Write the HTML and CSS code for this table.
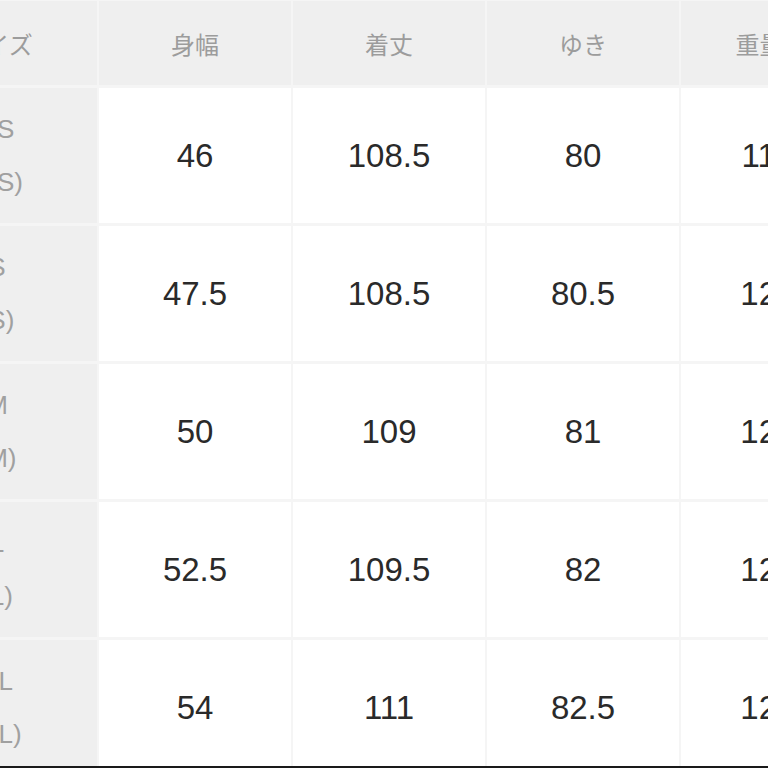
FILE: index.html
```html
<!DOCTYPE html>
<html lang="ja">
<head>
<meta charset="utf-8">
<link rel="stylesheet" href="styles.css">
</head>
<body>
<div class="frame">
  <div class="sheet">
    <div class="cell head first">サイズ</div>
    <div class="cell head">身幅</div>
    <div class="cell head">着丈</div>
    <div class="cell head">ゆき</div>
    <div class="cell head">重量 (g)</div>

    <div class="cell size"><span>XS</span><span>(XS)</span></div>
    <div class="cell val">46</div>
    <div class="cell val">108.5</div>
    <div class="cell val">80</div>
    <div class="cell val">1150</div>

    <div class="cell size"><span>S</span><span>(S)</span></div>
    <div class="cell val">47.5</div>
    <div class="cell val">108.5</div>
    <div class="cell val">80.5</div>
    <div class="cell val">1200</div>

    <div class="cell size"><span>M</span><span>(M)</span></div>
    <div class="cell val">50</div>
    <div class="cell val">109</div>
    <div class="cell val">81</div>
    <div class="cell val">1250</div>

    <div class="cell size"><span>L</span><span>(L)</span></div>
    <div class="cell val">52.5</div>
    <div class="cell val">109.5</div>
    <div class="cell val">82</div>
    <div class="cell val">1280</div>

    <div class="cell size"><span>XL</span><span>(XL)</span></div>
    <div class="cell val">54</div>
    <div class="cell val">111</div>
    <div class="cell val">82.5</div>
    <div class="cell val">1290</div>
  </div>
  <div class="bottom-bar"></div>
</div>
</body>
</html>
```
FILE: styles.css
```css
html, body {
  margin: 0;
  padding: 0;
  background: #f5f5f5;
}
.frame {
  width: 768px;
  height: 768px;
  overflow: hidden;
  display: flex;
  flex-direction: column;
  background: #f5f5f5;
}
.sheet {
  flex: 1;
  min-height: 0;
  overflow: hidden;
  display: grid;
  grid-template-columns: 200px repeat(4, 192px);
  grid-template-rows: 84px repeat(5, 135px);
  column-gap: 2px;
  row-gap: 3px;
  margin-left: -103px;
  padding-top: 1px;
  background: #f5f5f5;
}
.cell {
  display: flex;
  align-items: center;
  justify-content: center;
  text-align: center;
  white-space: nowrap;
}
.head {
  background: #efefef;
  color: #9c9c9c;
  font-family: "Noto Sans CJK JP", sans-serif;
  font-size: 24px;
}
.size {
  background: #efefef;
  color: #a0a0a0;
  font-family: "Liberation Sans", Arial, sans-serif;
  font-size: 26px;
  flex-direction: column;
  line-height: 53px;
}
.size span {
  display: block;
}
.val {
  background: #ffffff;
  color: #2a2a2a;
  font-family: "Liberation Sans", Arial, sans-serif;
  font-size: 33px;
}
.bottom-bar {
  height: 2px;
  flex: none;
  background: #1a1a1a;
}
```
